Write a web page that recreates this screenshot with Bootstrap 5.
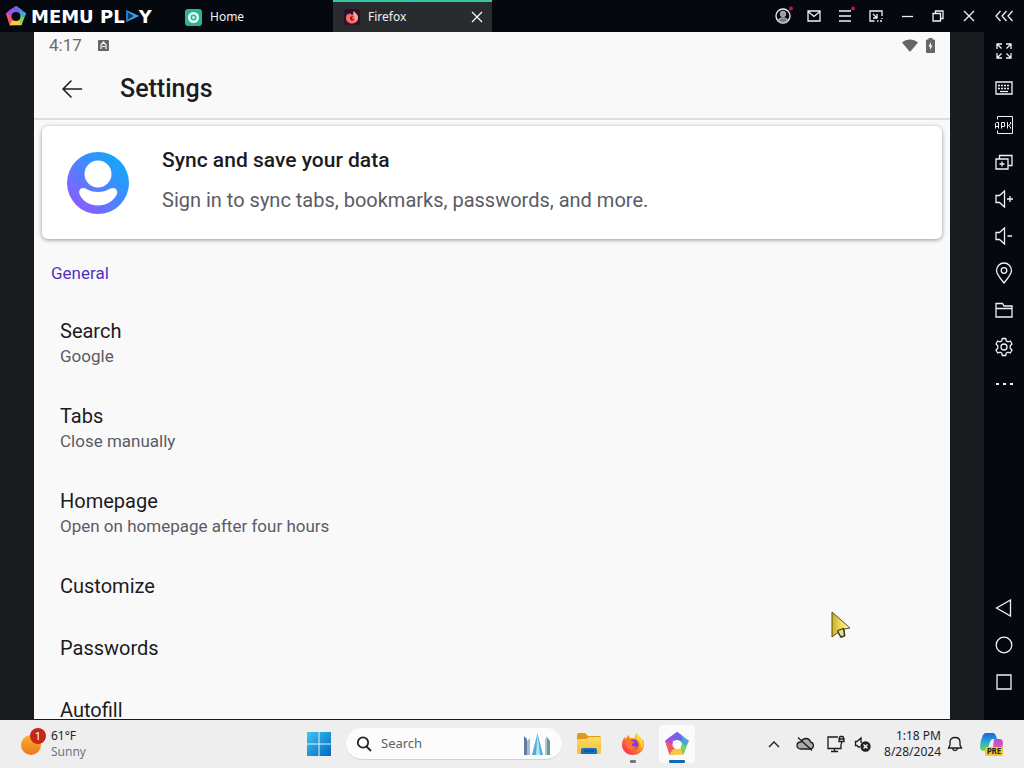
<!DOCTYPE html>
<html lang="en">
<head>
    <meta charset="UTF-8">
    <meta name="viewport" content="width=device-width, initial-scale=1">
    <title>Settings</title>
    <link href="https://cdn.jsdelivr.net/npm/bootstrap@5.3.3/dist/css/bootstrap.min.css" rel="stylesheet">
    <script src="https://cdn.jsdelivr.net/npm/bootstrap@5.3.3/dist/js/bootstrap.bundle.min.js"></script>
    <style>
        body { font-family: "Noto Sans", "Open Sans", sans-serif; font-size: 12px; background: #05080f; }
        svg { display: block; flex: none; }
        .line-icon { fill: none; stroke: currentColor; stroke-width: 1.3; }
        .btn { --bs-btn-border-width: 0; --bs-btn-padding-x: 0; --bs-btn-padding-y: 0; --bs-btn-border-radius: 0; }

        /* title bar */
        .title-bar { height: 32px; background: #05080f; color: #f2f2f2; }
        .brand { width: 174px; padding-left: 5px; font: bold 18px "DejaVu Sans", sans-serif; color: #fff; }
        .app-tab { width: 159px; padding: 0 8px 0 11px; gap: 8px; border-top: 2px solid transparent; }
        .app-tab a { color: #f2f2f2; gap: 8px; }
        .app-tab.current { background: #292c2f; border-top-color: #35c7a0; }
        .win-btn { width: 31px; color: #f2f2f2; }
        .side-btn { width: 40px; height: 37px; color: #f2f2f2; }

        /* emulator screen */
        .stage { background: #181c1f; padding: 0 34px; border-bottom: 1px solid #16191c; }
        .phone { background: #f9f9fa; color: #1c1b22; font-family: Roboto, sans-serif; }
        .phone-status { height: 27px; padding: 0 15px; font-size: 17px; color: #6a6a6a; }
        .phone-header { height: 61px; padding: 0 26px; gap: 36px; border-bottom: 2px solid #dedede; }
        .phone-header h1 { font-size: 25px; font-weight: 500; }
        .sync-card { margin: 6px 8px 0; height: 113px; padding: 0 25px; gap: 33px; background: #fff; border-radius: 6px;
            box-shadow: 0 1px 4px rgba(0, 0, 0, .4); color: #1c1b22; }
        .sync-copy { padding-bottom: 5px; }
        .sync-title { font-size: 21px; font-weight: 500; line-height: 40px; }
        .sync-text { font-size: 20px; line-height: 40px; color: #5b5b66; }
        .group-title { font-size: 17px; line-height: 24px; font-weight: 400; color: #5a2fc0; margin: 22px 17px 16px; }
        .setting { min-height: 62px; padding: 18px 26px; color: #1c1b22; }
        .setting-name { font-size: 20px; line-height: 25px; }
        .setting-value { font-size: 17px; line-height: 24px; color: #5b5b66; }
        .pointer { left: 797px; top: 579px; }

        .side-bar { width: 40px; background: #05080f; padding-bottom: 20px; }

        /* task bar */
        .task-bar { height: 48px; background: #eeeeef; color: #1b1b1b; }
        .task-center { margin-right: 44px; }
        .two-line { font-size: 12px; line-height: 16px; }
        .side-zone { flex: 1 1 0; }
        .task-btn { width: 36px; height: 38px; margin: 0 4px; }
        .task-btn.current { background: #fafafa; border-radius: 4px; }
        .search-pill { width: 216px; height: 32px; margin: 0 5px; padding: 0 10px; gap: 9px; background: #fcfcfc;
            border-radius: 16px; border-bottom: 1px solid #d2d2d4; }
        .search-pill input { font-size: 13px; color: #5c5c5c; background: transparent; }
        .search-pill input::placeholder { color: #606060; }
        .tray-btn { width: 27px; height: 32px; color: #1b1b1b; }
        .copilot { margin: 0 19px 0 11px; }
    </style>
</head>
<body class="vh-100 d-flex flex-column overflow-hidden">

<svg width="0" height="0" class="position-absolute" aria-hidden="true">
    <defs>
        <linearGradient id="avatarFill" x1="0" y1="1" x2="1" y2="0">
            <stop offset="0.1" stop-color="#9059ff"/><stop offset="0.6" stop-color="#3a8eff"/><stop offset="1" stop-color="#00b3f4"/>
        </linearGradient>
        <linearGradient id="foxBody" x1="1" y1="0" x2="0" y2="1">
            <stop offset="0" stop-color="#ffe226"/><stop offset="0.45" stop-color="#ff8a1e"/><stop offset="1" stop-color="#f5156c"/>
        </linearGradient>
        <linearGradient id="winFill" x1="0" y1="0" x2="1" y2="1">
            <stop offset="0" stop-color="#3cc5f2"/><stop offset="1" stop-color="#0067c4"/>
        </linearGradient>
        <linearGradient id="sunFill" x1="0" y1="0" x2="0" y2="1">
            <stop offset="0" stop-color="#f7b32b"/><stop offset="1" stop-color="#ee7420"/>
        </linearGradient>
        <linearGradient id="folderFill" x1="0" y1="0" x2="0" y2="1">
            <stop offset="0" stop-color="#ffda68"/><stop offset="1" stop-color="#f8bd31"/>
        </linearGradient>
        <linearGradient id="cursorFill" x1="0" y1="0" x2="1" y2="0">
            <stop offset="0" stop-color="#c9ae20"/><stop offset="0.5" stop-color="#f3dd62"/><stop offset="1" stop-color="#fff4c0"/>
        </linearGradient>
        <linearGradient id="copilotA" x1="0" y1="0" x2="0" y2="1">
            <stop offset="0" stop-color="#1c62d8"/><stop offset="0.5" stop-color="#24aed0"/><stop offset="1" stop-color="#7fd04f"/>
        </linearGradient>
        <linearGradient id="copilotB" x1="0" y1="0" x2="0" y2="1">
            <stop offset="0" stop-color="#a951e6"/><stop offset="0.5" stop-color="#e7559f"/><stop offset="1" stop-color="#ff9b55"/>
        </linearGradient>
        <symbol id="pentagon" viewBox="0 0 24 24">
            <path d="M12 1 6 5l3 5 7-1 2-4z" fill="#6574e8"/>
            <path d="M6 5 1 9l3 8 5-2-1-6 3-2z" fill="#a94fe0"/>
            <path d="M1 9l4 13h4l2-5-4-5z" fill="#ee5967"/>
            <path d="M5 22h13l1-5-6-1-5 1z" fill="#f7c93e"/>
            <path d="M18 22l5-13-4-1-4 6 1 4z" fill="#7bd25c"/>
            <path d="M12 1l11 8-3 5-6-5-3-4z" fill="#43a7dc"/>
            <path d="M12 1 7 5l5 3 5 1-1-5z" fill="#7a60e6"/>
        </symbol>
        <symbol id="fox" viewBox="0 0 24 24">
            <path d="M12 23C5.500 23 1 18.500 1 12.500 1 9 2.500 6.500 4 5l.5 2.500C5.500 5 7 3.500 8 3c-.2 1.500.3 2.500 1 3 1.500-.3 4 0 5 .5C13.500 4 14.500 2 16 1c0 3 4 4 5.500 7l.5-1c1 2 1 4 1 5.500C23 18.500 18.500 23 12 23z" fill="url(#foxBody)"/>
            <circle cx="12.500" cy="12.500" r="5" fill="#7a3fe0"/>
            <path d="M5 10c2-2 5-2 6-1 1 .8 2 .8 3 1-1 1.200-2.500 1-3 2.500 0 2 2.500 2.700 5 1.500-1 3-4.500 4-7 3-3-1-4.500-4-4-7z" fill="#ff7139"/>
            <path d="M16 1c0 3 4 4 5.500 8 .8 3 0 6-1.500 8 .2-5-1-8-4-10-1.500-1.500-1-4 0-6z" fill="#ffd83a"/>
        </symbol>
    </defs>
</svg>

<header class="title-bar d-flex flex-shrink-0">
    <div class="brand d-flex align-items-center flex-shrink-0">
        <svg width="22" height="22" class="me-1"><use href="#pentagon"/><circle cx="11" cy="11.500" r="4.500" fill="#05080f"/></svg>
        <span>MEMU PL</span>
        <svg width="14" height="12" viewBox="0 0 14 12"><path d="M1 0 14 6 1 12z" fill="#2479c4"/><path d="M3 3l6 3-6 3z" fill="#0b3158"/><path d="M1 0l8 6-8 6 13-6z" fill="#3aa0e8"/></svg>
        <span>Y</span>
    </div>
    <nav class="d-flex flex-grow-1" aria-label="Open apps">
        <div class="app-tab d-flex align-items-center">
            <a href="#home" class="d-flex align-items-center text-decoration-none">
                <svg width="17" height="17" viewBox="0 0 17 17"><rect width="17" height="17" rx="3" fill="#2bb594"/><circle cx="8.500" cy="8.500" r="5.500" fill="#e9fff9"/><circle cx="8.500" cy="8.500" r="3" fill="#2bb594"/><circle cx="8.500" cy="8.500" r="1.300" fill="#fff"/></svg>
                <span>Home</span>
            </a>
        </div>
        <div class="app-tab current d-flex align-items-center">
            <a href="#firefox" class="d-flex align-items-center text-decoration-none flex-grow-1" aria-current="page">
                <svg width="16" height="16" viewBox="0 0 16 16"><rect width="16" height="16" rx="3" fill="#2b1030"/><path d="M8 14.500c-3.500 0-6-2.300-6-5.500 0-2 1-4 2-4.500l.5 1L6.500 4l.5 1.500c1 0 1.500.3 2 .5C8.500 4 9 3 10 2c.5 2 4 3 4 7 0 3.200-2.500 5.500-6 5.500z" fill="#ff6b5e"/><path d="M10 2c.5 2 4 3 4 7-.5 2-1.500 3-3 3.500C12 9 9 7 10 2z" fill="#ffa98c"/><path d="M7 7.500c1-.3 2 0 2.500 0L8 9c0 1 1.500 1.500 2.500.7C10 11.500 8 12 6.700 11 5.500 10 5.800 8 7 7.500z" fill="#8a1848"/></svg>
                <span>Firefox</span>
            </a>
            <button type="button" class="btn text-light" aria-label="Close tab">
                <svg class="line-icon" width="14" height="14"><path d="M2 2l10 10M12 2 2 12"/></svg>
            </button>
        </div>
    </nav>
    <button type="button" class="btn win-btn d-flex align-items-center justify-content-center" aria-label="Account">
        <svg class="line-icon" width="20" height="20"><circle cx="10" cy="10" r="7"/><circle cx="10" cy="8" r="2.500" fill="#999" stroke="#aaa"/><path d="M5.500 14.500c1-3.500 8-3.500 9 0-2.500 2.500-6.500 2.500-9 0z" fill="#777" stroke="#aaa"/><circle cx="18" cy="2.500" r="2" fill="#c01840" stroke="none"/></svg>
    </button>
    <button type="button" class="btn win-btn d-flex align-items-center justify-content-center" aria-label="Messages">
        <svg class="line-icon" width="14" height="12"><path d="M1 1h12v10H1zM1 1.500l6 5 6-5"/></svg>
    </button>
    <button type="button" class="btn win-btn d-flex align-items-center justify-content-center" aria-label="Menu">
        <svg class="line-icon" width="20" height="20"><path d="M4 5h12M4 10h12M4 15h12"/><circle cx="18" cy="2.500" r="2" fill="#c01840" stroke="none"/></svg>
    </button>
    <button type="button" class="btn win-btn d-flex align-items-center justify-content-center" aria-label="Mini window">
        <svg class="line-icon" width="14" height="12"><path d="M5.500 11H1V1h12v5M4 4l3.500 3.500M8 4v4H4M8 11h1.500M11 11h2M13 8v1"/></svg>
    </button>
    <button type="button" class="btn win-btn d-flex align-items-center justify-content-center" aria-label="Minimize">
        <svg class="line-icon" width="12" height="12"><path d="M1 6.500h11"/></svg>
    </button>
    <button type="button" class="btn win-btn d-flex align-items-center justify-content-center" aria-label="Restore">
        <svg class="line-icon" width="12" height="12"><path d="M1 3.500h7.500V11H1zM3.500 3.500V1H11v7.500H8.500"/></svg>
    </button>
    <button type="button" class="btn win-btn d-flex align-items-center justify-content-center" aria-label="Close">
        <svg class="line-icon" width="12" height="12"><path d="M1 1l10 10M11 1 1 11"/></svg>
    </button>
    <button type="button" class="btn side-btn d-flex align-items-center justify-content-center h-100" aria-label="Collapse side bar">
        <svg class="line-icon" width="18" height="12"><path d="M5.500 1 1 6l4.500 5M11.500 1 7 6l4.500 5M17.500 1 13 6l4.500 5"/></svg>
    </button>
</header>

<div class="d-flex flex-grow-1 overflow-hidden">
    <div class="stage flex-grow-1 d-flex overflow-hidden">
        <main class="phone flex-grow-1 position-relative overflow-hidden">
            <div class="phone-status d-flex align-items-center">
                <span>4:17</span>
                <svg class="ms-3" width="11" height="11"><rect width="11" height="11" rx="1" fill="#666"/><path d="M3 9V5l2.500-3L8 5v4M4 6.500h3" fill="none" stroke="#f4f4f4" stroke-width="1.200"/></svg>
                <svg class="ms-auto" width="16" height="13"><path d="M0 3.500C4.500-.5 11.500-.5 16 3.500L8 13z" fill="#666"/></svg>
                <svg class="ms-2" width="9" height="15"><path d="M2.500 1.500V0h4v1.500H8q1 0 1 1V14q0 1-1 1H1q-1 0-1-1V2.500q0-1 1-1z" fill="#666"/><path d="M5 4 2.500 8.500H4V12l2.500-4.500H5z" fill="#f9f9fa"/></svg>
            </div>
            <div class="phone-header d-flex align-items-center">
                <button type="button" class="btn" aria-label="Back">
                    <svg width="24" height="24" viewBox="0 0 24 24" fill="none" stroke="#1c1b22" stroke-width="1.600" stroke-linecap="round" stroke-linejoin="round"><path d="M21.500 12H3M11 4 3 12l8 8"/></svg>
                </button>
                <h1 class="m-0">Settings</h1>
            </div>

            <a href="#sync" class="sync-card d-flex align-items-center text-decoration-none">
                <svg width="62" height="62" viewBox="0 0 62 62"><circle cx="31" cy="31" r="31" fill="url(#avatarFill)"/><circle cx="31" cy="22" r="13.500" fill="#fff"/><path d="M16 36c-3 0-4.500 3-3.500 6C15 49 23 53.500 31 53.500S47 49 50 42c1-3-1-6-4-6-2 0-3.500 1-5 1.800-6 3-14 3-20 0C19.500 37 18 36 16 36z" fill="#fff"/></svg>
                <span class="sync-copy">
                    <span class="sync-title d-block">Sync and save your data</span>
                    <span class="sync-text d-block">Sign in to sync tabs, bookmarks, passwords, and more.</span>
                </span>
            </a>

            <h2 class="group-title">General</h2>
            <nav aria-label="General settings">
                <a href="#search" class="setting d-block text-decoration-none">
                    <span class="setting-name d-block">Search</span>
                    <span class="setting-value d-block">Google</span>
                </a>
                <a href="#tabs" class="setting d-block text-decoration-none">
                    <span class="setting-name d-block">Tabs</span>
                    <span class="setting-value d-block">Close manually</span>
                </a>
                <a href="#homepage" class="setting d-block text-decoration-none">
                    <span class="setting-name d-block">Homepage</span>
                    <span class="setting-value d-block">Open on homepage after four hours</span>
                </a>
                <a href="#customize" class="setting d-block text-decoration-none">
                    <span class="setting-name d-block">Customize</span>
                </a>
                <a href="#passwords" class="setting d-block text-decoration-none">
                    <span class="setting-name d-block">Passwords</span>
                </a>
                <a href="#autofill" class="setting d-block text-decoration-none">
                    <span class="setting-name d-block">Autofill</span>
                </a>
            </nav>

            <svg class="pointer position-absolute" width="21" height="28" viewBox="0 0 21 28" aria-hidden="true"><path d="M1 1l18 16-6 1 1 7-4 1.500-3-5L1 26z" fill="url(#cursorFill)" stroke="#55501f" stroke-width="1"/><path d="M7 19.500l5.500-2 1 7-3.500 1.500-3-5z" fill="#e9dd8c" stroke="#33301a" stroke-width="1.200"/></svg>
        </main>
    </div>

    <aside class="side-bar d-flex flex-column flex-shrink-0" aria-label="Emulator tools">
        <button type="button" class="btn side-btn d-flex align-items-center justify-content-center" aria-label="Full screen">
            <svg class="line-icon" width="18" height="18"><path d="M2 7V2h5M2 2l4.500 4.500M11 2h5v5M16 2l-4.500 4.500M2 11v5h5M2 16l4.500-4.500M16 11v5h-5M16 16l-4.500-4.500"/></svg>
        </button>
        <button type="button" class="btn side-btn d-flex align-items-center justify-content-center" aria-label="Keyboard">
            <svg class="line-icon" width="18" height="14"><path d="M1 1h16v12H1z"/><path d="M3 4.500h12M3 7.500h12" stroke-dasharray="2 1"/><path d="M5 10.500h8"/></svg>
        </button>
        <button type="button" class="btn side-btn d-flex align-items-center justify-content-center" aria-label="Install APK">
            <svg width="18" height="18" fill="none" stroke="currentColor"><path d="M2.500 3.500v-3h15v17h-15v-3"/><path d="M.5 12.500v-5l1-1h2v6M.5 10.500h3M6.500 12.500v-6h3v4h-3M12.500 6v6.500M15.500 6v2l-2 1.500 2 1.500v1.500"/></svg>
        </button>
        <button type="button" class="btn side-btn d-flex align-items-center justify-content-center" aria-label="Multiple instances">
            <svg class="line-icon" width="18" height="16"><path d="M1 5h12v10H1zM4.500 5V1.500H17v10h-4M7 7.500v5M4.500 10h5"/></svg>
        </button>
        <button type="button" class="btn side-btn d-flex align-items-center justify-content-center" aria-label="Volume up">
            <svg class="line-icon" width="18" height="18"><path d="M1 5.500h3.500l5-4.500v16l-5-4.500H1zM12 9h6M15 6v6"/></svg>
        </button>
        <button type="button" class="btn side-btn d-flex align-items-center justify-content-center" aria-label="Volume down">
            <svg class="line-icon" width="18" height="18"><path d="M1 5.500h3.500l5-4.500v16l-5-4.500H1zM12.500 9H17"/></svg>
        </button>
        <button type="button" class="btn side-btn d-flex align-items-center justify-content-center" aria-label="Location">
            <svg class="line-icon" width="18" height="22"><path d="M9 21C4.500 15.500 1.500 12 1.500 8.500a7.500 7.500 0 0 1 15 0C16.500 12 13.500 15.500 9 21z"/><circle cx="9" cy="8.500" r="2.800"/></svg>
        </button>
        <button type="button" class="btn side-btn d-flex align-items-center justify-content-center" aria-label="Shared folder">
            <svg class="line-icon" width="18" height="16"><path d="M1 15V1.500h6.500L9 4h8v11zM1 6.500h16"/></svg>
        </button>
        <button type="button" class="btn side-btn d-flex align-items-center justify-content-center" aria-label="Settings">
            <svg class="line-icon" width="20" height="20"><path d="M8.300 1.500h3.400l.6 2.500 1.500.8 2.500-.8L18 7l-1.800 1.800v2.400L18 13l-1.700 3-2.500-.8-1.500.8-.6 2.500H8.300L7.700 16l-1.500-.8-2.500.8L2 13l1.800-1.800V8.800L2 7l1.700-3 2.500.8L7.700 4z" stroke-linejoin="round"/><circle cx="10" cy="10" r="3"/></svg>
        </button>
        <button type="button" class="btn side-btn d-flex align-items-center justify-content-center" aria-label="More">
            <svg width="18" height="4" fill="currentColor"><path d="M1 1h3v2H1zM8 1h3v2H8zM15 1h3v2h-3z"/></svg>
        </button>
        <button type="button" class="btn side-btn d-flex align-items-center justify-content-center mt-auto" aria-label="Back">
            <svg class="line-icon" width="18" height="18"><path d="M15.500 1v16L1.500 9z"/></svg>
        </button>
        <button type="button" class="btn side-btn d-flex align-items-center justify-content-center" aria-label="Home">
            <svg class="line-icon" width="18" height="18"><circle cx="9" cy="9" r="7.800"/></svg>
        </button>
        <button type="button" class="btn side-btn d-flex align-items-center justify-content-center" aria-label="Recent apps">
            <svg class="line-icon" width="18" height="18"><path d="M2 2h14v14H2z"/></svg>
        </button>
    </aside>
</div>

<footer class="task-bar d-flex align-items-center flex-shrink-0">
    <div class="side-zone ps-3">
        <button type="button" class="btn d-flex align-items-center text-start">
            <svg width="35" height="32"><circle cx="15" cy="17" r="10" fill="url(#sunFill)"/><circle cx="22" cy="8" r="8" fill="#c3261b"/><text x="22" y="12" text-anchor="middle" font-size="11" fill="#fff">1</text></svg>
            <span class="two-line">61°F<br><span class="text-secondary">Sunny</span></span>
        </button>
    </div>
    <div class="task-center d-flex align-items-center">
        <button type="button" class="btn task-btn d-flex align-items-center justify-content-center" aria-label="Start">
            <svg width="24" height="24" fill="url(#winFill)"><path d="M0 0h11.500v11.500H0zM12.500 0H24v11.500H12.500zM0 12.500h11.500V24H0zM12.500 12.500H24V24H12.500z"/></svg>
        </button>
        <div class="search-pill d-flex align-items-center">
            <label for="taskSearch" aria-label="Search"><svg width="16" height="16" fill="none" stroke="#222" stroke-width="1.800"><circle cx="7" cy="6.500" r="5.200"/><path d="M10.500 10.500 15 15"/></svg></label>
            <input id="taskSearch" type="text" class="border-0 p-0 flex-grow-1 w-50" placeholder="Search">
            <svg width="30" height="24"><path d="M2 23V4l3 3v16z" fill="#66799f"/><path d="M5 23V9l3-3v17z" fill="#a4bbd8"/><path d="M10 23 15.500 1 21 23z" fill="#56acd8"/><path d="M15.500 1 18 23h-4z" fill="#b3e2f4"/><path d="M23 23V8l2-3 3 4v14z" fill="#6b93a7"/><path d="M23 23V8l2-3v18z" fill="#a9ccc9"/></svg>
        </div>
        <button type="button" class="btn task-btn d-flex align-items-center justify-content-center" aria-label="File Explorer">
            <svg width="26" height="24"><path d="M1 3q0-2 2-2h6l3 3h11q2 0 2 2v5H1z" fill="#dc9c16"/><path d="M1 9q0-2 2-2h7l3-2h10q2 0 2 2v13q0 2-2 2H3q-2 0-2-2z" fill="url(#folderFill)"/><path d="M5 22v-4q0-2 2-2h12q2 0 2 2v4z" fill="#1670bf"/><path d="M8 19h10" stroke="#0b4f91" stroke-width="1.500"/></svg>
        </button>
        <button type="button" class="btn task-btn d-flex align-items-center justify-content-center" aria-label="Firefox">
            <svg width="26" height="38"><use href="#fox" x="1" y="7" width="24" height="24"/><rect x="10" y="35" width="6" height="3" rx="1" fill="#777"/></svg>
        </button>
        <button type="button" class="btn task-btn current d-flex align-items-center justify-content-center" aria-label="MEmu">
            <svg width="26" height="38"><use href="#pentagon" y="6" width="26" height="26"/><circle cx="13" cy="19.500" r="4.500" fill="#fff"/><rect x="5" y="35" width="16" height="3" rx="1" fill="#1068b8"/></svg>
        </button>
    </div>
    <div class="side-zone d-flex align-items-center justify-content-end">
        <button type="button" class="btn tray-btn d-flex align-items-center justify-content-center" aria-label="Show hidden icons">
            <svg class="line-icon" width="12" height="8"><path d="M1 7l5-5 5 5"/></svg>
        </button>
        <button type="button" class="btn tray-btn d-flex align-items-center justify-content-center ms-1" aria-label="OneDrive">
            <svg class="line-icon" width="18" height="16"><path d="M5 13q-4 0-4-3.500T5 6q1.500-3.500 5-3.500T14.500 6q3 .5 3 3.500T14 13z" fill="#aaa"/><path d="M2 1.500l14 13"/></svg>
        </button>
        <button type="button" class="btn tray-btn d-flex align-items-center justify-content-center ms-1" aria-label="Network">
            <svg class="line-icon" width="18" height="18"><path d="M11 2H1v11.500h13V9M7.500 13.500v3M4 16.500h7M12.500 4V2.500q0-1 1-1h2q1 0 1 1V4M12 4h5v2.500h-5zM14.500 6.500V9"/></svg>
        </button>
        <button type="button" class="btn tray-btn d-flex align-items-center justify-content-center" aria-label="Sound muted">
            <svg class="line-icon" width="18" height="16"><path d="M6 11H4.500L3 9.500H1.500v-4H3L7 2v5"/><circle cx="11.500" cy="10.500" r="4.500" fill="#222"/><path d="M9.500 8.500l4 4M13.500 8.500l-4 4" stroke="#fff"/></svg>
        </button>
        <button type="button" class="btn two-line text-end ms-2">1:18 PM<br>8/28/2024</button>
        <button type="button" class="btn tray-btn d-flex align-items-center justify-content-center" aria-label="Notifications">
            <svg class="line-icon" width="16" height="16"><path d="M1.500 12 3 9V6q0-4.500 5-4.500T13 6v3l1.500 3zM5.500 12.500q.5 2 2.500 2t2.500-2"/></svg>
        </button>
        <button type="button" class="btn copilot" aria-label="Copilot">
            <svg width="26" height="26"><path d="M7 2h7q2 0 3 3l1 3h-4q-2 0-3 3l-2 6q-1 3-4 3-4 0-4-4Q1 10 4 4q1-2 3-2z" fill="url(#copilotA)"/><path d="M15 8h5q4 0 4 4 0 5-3 10-1 2-4 2h-6q2 0 2.500-3z" fill="url(#copilotB)"/><rect x="6" y="16" width="18" height="9" rx="2" fill="#f5c531"/><text x="15" y="23" text-anchor="middle" font-size="8" font-weight="700" fill="#222">PRE</text></svg>
        </button>
    </div>
</footer>

</body>
</html>
